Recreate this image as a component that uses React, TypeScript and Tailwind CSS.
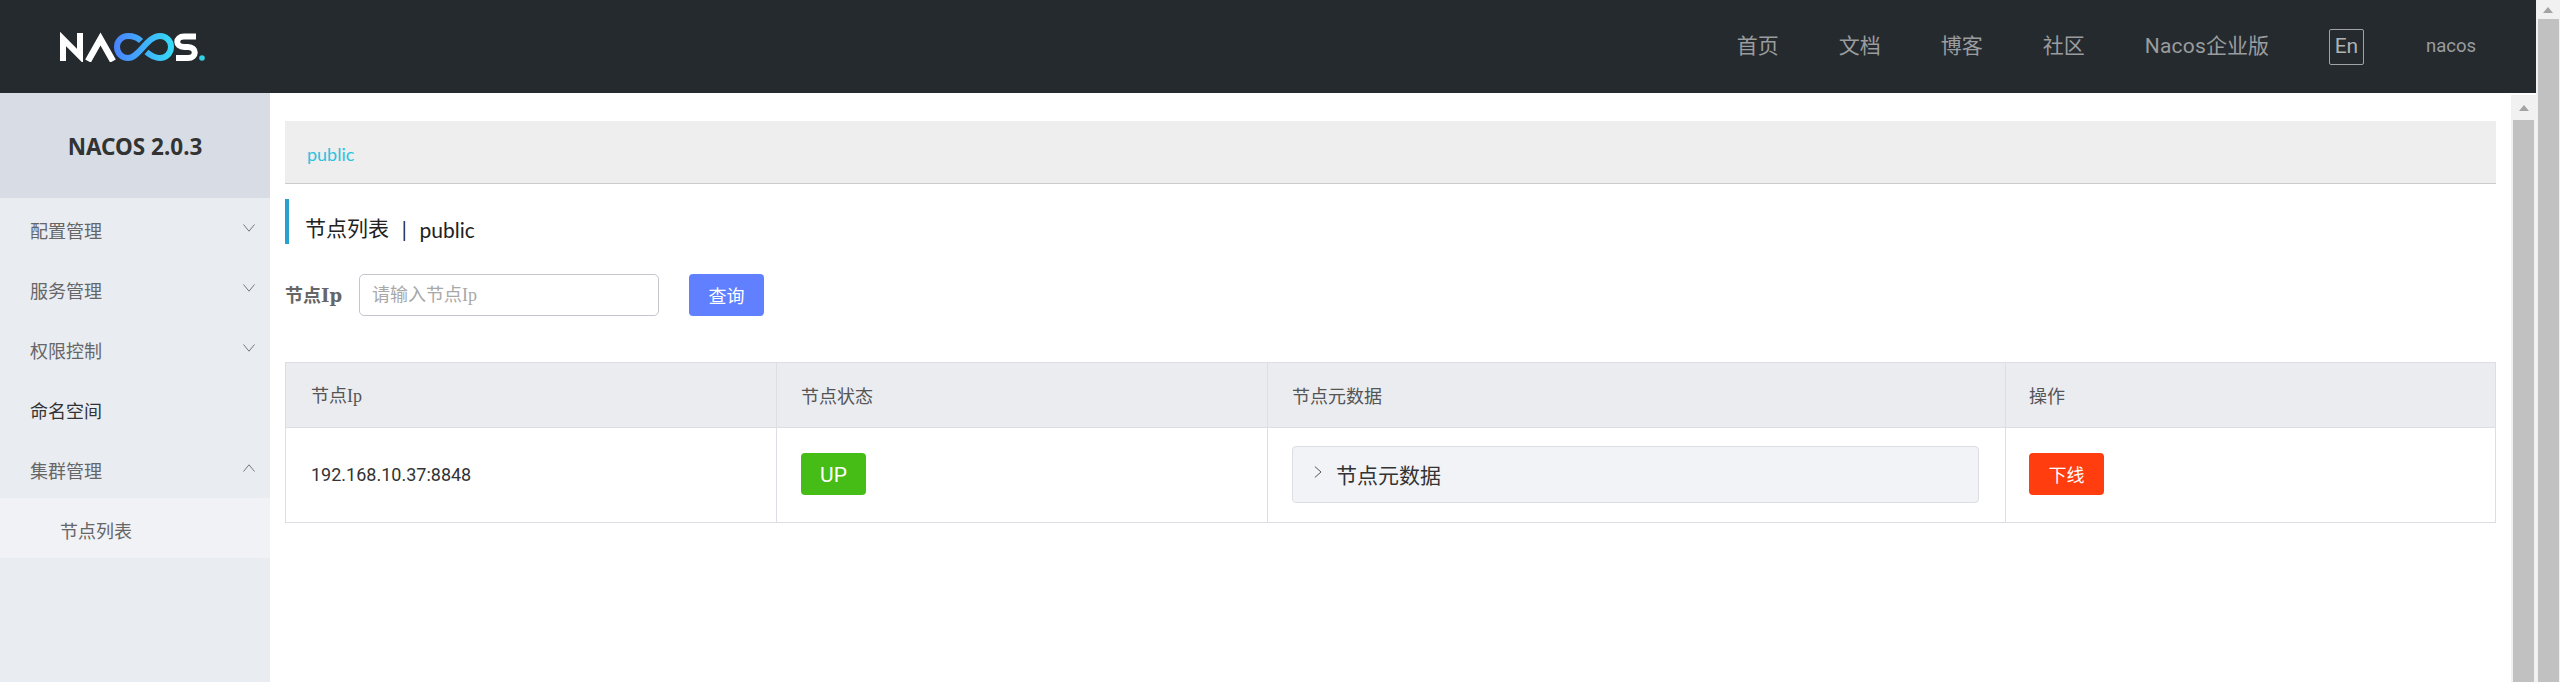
const sansFont = "font-['Roboto','Noto_Sans_CJK_SC',sans-serif]";

const navItems = ['首页', '文档', '博客', '社区'];

function Logo() {
  return (
    <svg width="146" height="30" viewBox="60 26 146 30" fill="none">
      <defs>
        <linearGradient id="nacos-loop" x1="114" y1="0" x2="174" y2="0" gradientUnits="userSpaceOnUse">
          <stop offset="0" stopColor="#4a82ff" />
          <stop offset="1" stopColor="#35dcf6" />
        </linearGradient>
      </defs>
      <path d="M63 55V33L80 50V27" stroke="#fff" strokeWidth="6" />
      <path d="M88 55L100.500 33L113 55" stroke="#fff" strokeWidth="6.500" />
      <path
        d="M141 35C137 31 132 30 128 30A11 11 0 0 0 128 52C139 52 147 30 160 30A11 11 0 0 1 160 52C154 52 150 49 146.500 46"
        stroke="url(#nacos-loop)"
        strokeWidth="6"
      />
      <path d="M196 30.500H184C175 30.500 175 41 184 41H188C197 41 197 52 188 52H176" stroke="#fff" strokeWidth="6" />
      <circle cx="202" cy="52" r="2.800" fill="#35cfe6" />
    </svg>
  );
}

function Scrollbar({ track, arrowHeight }: { track: string; arrowHeight: string }) {
  return (
    <div className={`flex shrink-0 flex-col items-center bg-[#f1f1f1] ${track}`}>
      <div className={`flex w-full items-center justify-center ${arrowHeight}`}>
        <div className="h-0 w-0 border-x-[5px] border-b-[6px] border-x-transparent border-b-[#a3a3a3]" />
      </div>
      <div className="w-[21px] flex-1 bg-[#c1c1c1]" />
    </div>
  );
}

function Header() {
  return (
    <header className="flex h-[93px] shrink-0 items-center justify-between bg-[#252a2f] pr-[60px] pl-[60px]">
      <Logo />
      <nav className="flex items-center gap-[60px] text-[21px] text-[#9a9c9e]">
        {navItems.map((item) => (
          <span key={item}>{item}</span>
        ))}
        <span>
          <span className="tracking-[0.2px]">Nacos</span>企业版
        </span>
        <span className="flex h-[36px] w-[35px] items-center justify-center rounded-[2px] border border-[#a0a2a4] text-[#b0b2b4]">
          En
        </span>
        <span className="ml-[2px] text-[18.500px]">nacos</span>
      </nav>
    </header>
  );
}

function Caret({ up }: { up?: boolean }) {
  return (
    <svg width="12" height="8" viewBox="0 0 12 8" fill="none" stroke="#777777" className="mt-[-1px]">
      <path d={up ? 'M0.500 7.500L6 0.800L11.500 7.500' : 'M0.500 0.500L6 7.200L11.500 0.500'} />
    </svg>
  );
}

function MenuRow({ label, state, dark }: { label: string; state?: 'open' | 'closed'; dark?: boolean }) {
  return (
    <div className={`flex h-[60px] items-center justify-between pr-[15px] pl-[30px] text-[18px] ${dark ? 'text-[#333333]' : 'text-[#666666]'}`}>
      <span className="pt-[6px]">{label}</span>
      {state === 'closed' && <Caret />}
      {state === 'open' && <Caret up />}
    </div>
  );
}

function Sidebar() {
  return (
    <aside className="w-[270px] shrink-0 bg-[#e9ecf1]">
      <div className="flex h-[105px] items-center justify-center bg-[#d8dde5] pt-[3px] font-['Noto_Sans',sans-serif] text-[22.500px] font-bold text-[#333333]">
        NACOS 2.0.3
      </div>
      <MenuRow label="配置管理" state="closed" />
      <MenuRow label="服务管理" state="closed" />
      <MenuRow label="权限控制" state="closed" />
      <MenuRow label="命名空间" dark />
      <MenuRow label="集群管理" state="open" />
      <div className="flex h-[60px] items-center bg-[#f0f2f6] pt-[6px] pl-[60px] text-[18px] text-[#666666]">节点列表</div>
    </aside>
  );
}

function NodeTable() {
  const cols = 'grid grid-cols-[490px_491px_738px_1fr]';
  return (
    <div className="mt-[46px] border border-[#dcdee3] text-[18px] text-[#333333]">
      <div className={`${cols} h-[65px] border-b border-[#dcdee3] bg-[#ebecf0] text-[#555555]`}>
        <div className="flex items-center pt-[2px] pl-[25px]">
          <span>
            节点<span className="font-['Liberation_Serif',serif]">Ip</span>
          </span>
        </div>
        <div className="flex items-center border-l border-[#dcdee3] pt-[2px] pl-[24px]">节点状态</div>
        <div className="flex items-center border-l border-[#dcdee3] pt-[2px] pl-[24px]">节点元数据</div>
        <div className="flex items-center border-l border-[#dcdee3] pt-[2px] pl-[23px]">操作</div>
      </div>
      <div className={`${cols} h-[94px]`}>
        <div className="flex items-center pb-[2px] pl-[25px]">192.168.10.37:8848</div>
        <div className="flex items-center border-l border-[#dcdee3] pb-[2px] pl-[24px]">
          <span className="flex h-[42px] w-[65px] items-center justify-center rounded-[4px] bg-[#46bd17] pt-[3px] text-[21px] text-white">UP</span>
        </div>
        <div className="flex items-center border-l border-[#dcdee3] pb-[2px] pl-[24px]">
          <div className="flex h-[57px] w-[687px] items-center rounded-[4px] border border-[#dcdee3] bg-[#f2f3f7] pl-[21px] text-[21px] text-[#333333]">
            <svg width="8" height="12" viewBox="0 0 8 12" fill="none" stroke="#555555" className="mt-[-4px] mr-[14px]">
              <path d="M0.800 0.500L7 6L0.800 11.500" />
            </svg>
            <span className="pt-[5px]">节点元数据</span>
          </div>
        </div>
        <div className="flex items-center border-l border-[#dcdee3] pb-[2px] pl-[23px]">
          <span className="flex h-[42px] w-[75px] items-center justify-center rounded-[4px] bg-[#ff3d0f] pt-[3px] text-white">下线</span>
        </div>
      </div>
    </div>
  );
}

export default function App() {
  return (
    <div className={`flex h-[682px] w-[2560px] overflow-hidden bg-white ${sansFont}`}>
      <div className="flex min-w-0 flex-1 flex-col">
        <Header />
        <div className="flex min-h-0 flex-1">
          <Sidebar />
          <main className="min-w-0 flex-1 pt-[28px] pr-[15px] pl-[15px]">
            <div className="flex h-[63px] items-center border-b border-[#cccccc] bg-[#eeeeee] pt-[5px] pl-[22px] font-['Lato',sans-serif] text-[18px] text-[#2cc3e0]">
              public
            </div>
            <div className="mt-[15px] flex h-[45px] items-center border-l-[4px] border-[#2a9fd0] pt-[16px] pl-[16px] text-[21px] text-[#222222]">
              节点列表
              <span className="mx-[10px] font-['Noto_Sans',sans-serif] text-[19px]">|</span>
              <span className="font-['Lato',sans-serif]">public</span>
            </div>
            <div className="mt-[30px] flex items-center">
              <label className="w-[74px] text-[18px] font-bold text-[#666666]">
                节点<span className="font-['DejaVu_Serif',serif]">Ip</span>
              </label>
              <div className="flex h-[42px] w-[300px] items-center rounded-[5px] border border-[#c4c6cf] pl-[12px] text-[18px] text-[#a8a8a8]">
                <span>
                  请输入节点<span className="font-['Liberation_Serif',serif]">Ip</span>
                </span>
              </div>
              <button className="ml-[30px] h-[42px] w-[75px] rounded-[4px] bg-[#6080ff] pt-[2px] text-[18px] text-white">查询</button>
            </div>
            <NodeTable />
          </main>
          <div className="flex pt-[2px]">
            <Scrollbar track="w-[25px]" arrowHeight="h-[25px]" />
          </div>
        </div>
      </div>
      <Scrollbar track="w-[24px]" arrowHeight="h-[19px]" />
    </div>
  );
}
